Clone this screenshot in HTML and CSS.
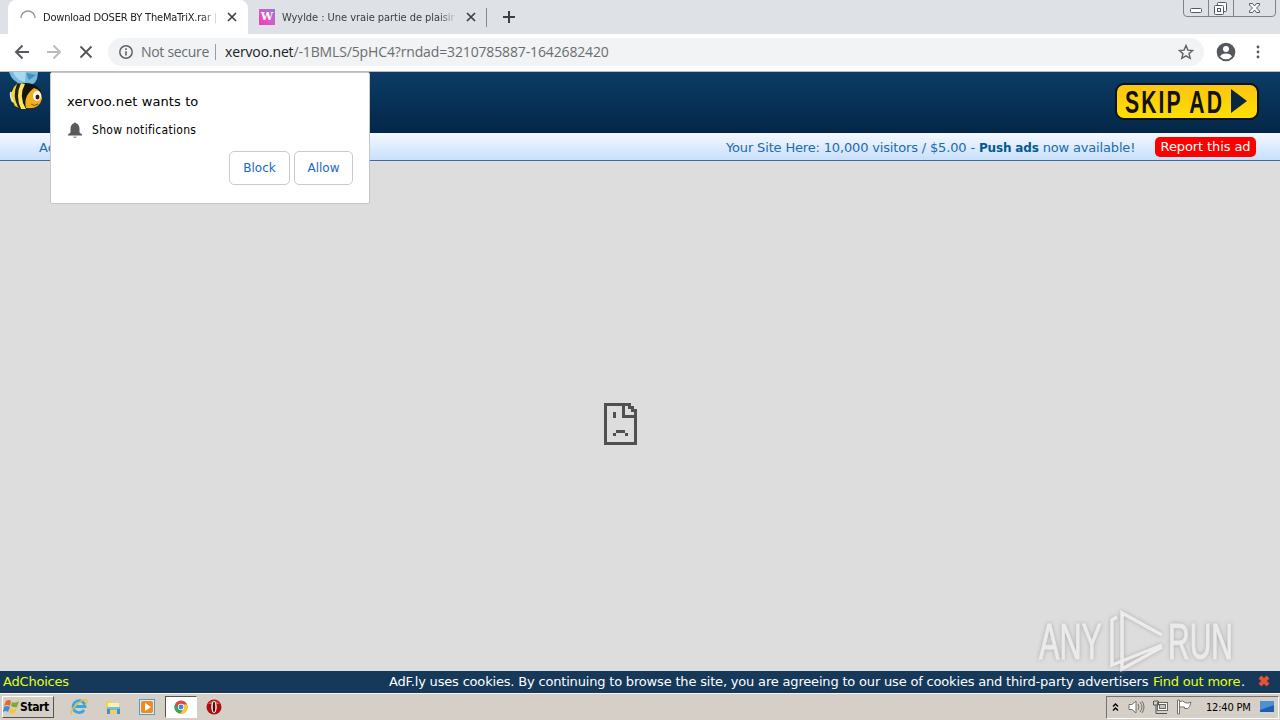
FILE: index.html
```html
<!DOCTYPE html>
<html lang="en">
<head>
    <meta charset="UTF-8">
    <title>Download DOSER BY TheMaTriX.rar</title>
    <link rel="stylesheet" href="styles.css">
</head>
<body>
    <div class="tabs">
        <div class="tab active">
            <svg class="spinner" width="16" height="16" viewBox="0 0 16 16"><path d="M1 9A7 7 0 0 1 15 9" fill="none" stroke="#999" stroke-width="1.6"/></svg>
            <span class="tab-title first-title">Download DOSER BY TheMaTriX.rar |</span>
            <svg class="tab-close" width="10" height="10" viewBox="0 0 10 10"><path d="M1 1L9 9M9 1L1 9" stroke="#3c4043" stroke-width="1.7"/></svg>
        </div>
        <div class="tab other">
            <span class="favicon">W</span>
            <span class="tab-title second-title">Wyylde : Une vraie partie de plaisir !</span>
            <svg class="tab-close" width="10" height="10" viewBox="0 0 10 10"><path d="M1 1L9 9M9 1L1 9" stroke="#3c4043" stroke-width="1.7"/></svg>
        </div>
        <svg class="new-tab" width="12" height="12" viewBox="0 0 12 12"><path d="M6 0V12M0 6H12" stroke="#3c4043" stroke-width="2"/></svg>
        <svg class="window-buttons" width="94" height="18" viewBox="0 0 94 18" fill="none" stroke="#7f838b">
            <path d="M.5 0V13Q.5 16.500 4 16.500H89Q92.500 16.500 92.500 13V0M25.500 0V16M50.500 0V16"/>
            <g stroke="#555961"><rect x="7.500" y="8.500" width="11" height="4" rx="1" fill="#fff"/>
            <rect x="34.500" y="2.500" width="9" height="9" rx="1" fill="#fff"/><rect x="31.500" y="5.500" width="9" height="9" rx="1" fill="#fff"/><rect x="34.500" y="8.500" width="3" height="3"/></g>
            <path d="M66.500 3.500h3l2 2.500 2-2.500h3v1.500l-3 3 3 3v1.500h-3l-2-2.500-2 2.500h-3v-1.500l3-3-3-3z" stroke="#555961" fill="#fff"/>
        </svg>
    </div>

    <div class="toolbar">
        <svg width="16" height="16" viewBox="0 0 16 16" fill="none" stroke="#54575b" stroke-width="1.9"><path d="M15 8H2M8.500 1.500L2 8l6.500 6.500"/></svg>
        <svg width="16" height="16" viewBox="0 0 16 16" fill="none" stroke="#b9bbbe" stroke-width="1.9"><path d="M1 8H14M7.500 1.500L14 8l-6.500 6.500"/></svg>
        <svg width="16" height="16" viewBox="0 0 16 16" fill="none" stroke="#54575b" stroke-width="1.9"><path d="M2.500 2.500l11 11M13.500 2.500l-11 11"/></svg>
        <div class="address">
            <svg class="info" width="14" height="14" viewBox="0 0 14 14"><circle cx="7" cy="7" r="6.200" fill="none" stroke="#5f6368" stroke-width="1.500"/><path d="M7 6.200V10.500M7 3.300V5" stroke="#5f6368" stroke-width="1.600"/></svg>
            <span class="secure">Not secure</span>
            <span class="divider"></span>
            <span class="url"><b>xervoo.net</b>/-1BMLS/5pHC4?rndad=3210785887-1642682420</span>
            <svg class="star" width="16" height="16" viewBox="0 0 16 16"><path d="M8 1.500L9.900 6.100l4.800.4L11 9.600l1.200 4.700L8 11.800l-4.200 2.500L5 9.600 1.300 6.500l4.800-.4z" fill="none" stroke="#5f6368" stroke-width="1.400"/></svg>
        </div>
        <svg class="profile" width="20" height="20" viewBox="0 0 20 20"><circle cx="10" cy="10" r="9.300" fill="#54575b"/><circle cx="10" cy="7" r="3" fill="#fff"/><path d="M4 14.500Q5.500 11.500 10 11.500t6 3Q14 17.200 10 17.200T4 14.500" fill="#fff"/></svg>
        <svg class="dots" width="4" height="14" viewBox="0 0 4 14" fill="#54575b"><circle cx="2" cy="2" r="1.400"/><circle cx="2" cy="7" r="1.400"/><circle cx="2" cy="12" r="1.400"/></svg>
    </div>

    <div class="page">
        <div class="ad-header">
            <svg class="bee" width="46" height="40" viewBox="0 0 46 40">
                <path d="M9 0Q12 10 23 13 34 15 37 7L38 0z" fill="#75b9df"/>
                <path d="M13 0Q16 8 25 10L26 0z" fill="#a9d9f0"/><path d="M26 1L29 8 36 3" fill="#488eb8"/>
                <ellipse cx="26" cy="24" rx="16" ry="13" fill="#16140f"/>
                <path d="M14 15Q8 24 15 34L19 36Q12 24 18 11z" fill="#f4d633"/>
                <path d="M19 11Q13 25 21 37L26 37Q18 24 25 12z" fill="#f9e65a"/>
                <path d="M17 12Q12 24 18 35L21 37Q15 24 21 11z" fill="#26211a"/>
                <path d="M11 20Q10 25 13 30" stroke="#dfe3e2" stroke-width="2" fill="none"/>
                <path d="M34 16Q23 24 26 36 39 38 42 27 42 18 34 16z" fill="#efb11e"/>
                <ellipse cx="37" cy="24" rx="4" ry="5" fill="#fff"/><ellipse cx="37.500" cy="25" rx="2" ry="2.500" fill="#401020"/>
                <path d="M31 32Q34 35 38 32" stroke="#8a4b0a" fill="none"/>
            </svg>
            <div class="skip"><svg width="143" height="36" viewBox="0 0 143 36"><text x="10" y="29.500" textLength="99" lengthAdjust="spacingAndGlyphs">SKIP AD</text><path d="M116 6L132 18 116 30z" fill="#08283f"/></svg></div>
        </div>
        <div class="ad-bar">
            <span class="advertise">Advertise</span>
            <span class="offer">Your Site Here: 10,000 visitors / $5.00 - <b>Push ads</b> now available!</span>
            <span class="report"><span>Report this ad</span></span>
        </div>
        <div class="frame">
            <svg class="sad" width="33" height="42" viewBox="0 0 33 42" shape-rendering="crispEdges" fill="#505050">
                <path fill-rule="evenodd" d="M0 0H27V3H30V6H33V42H0zM3 3V39H30V15H18V3zM21 3V12H30V9H27V6H24V3z"/>
                <path d="M9 9h3v6H9zM12 27h9v3h-9zM9 30h3v3H9zM21 30h3v3h-3z"/>
            </svg>
        </div>
        <div class="cookie-bar">
            <span class="choices">AdChoices</span>
            <span class="cookies">AdF.ly uses cookies. By continuing to browse the site, you are agreeing to our use of cookies and third-party advertisers</span>
            <span class="more">Find out more</span><span class="stop">.</span>
            <svg class="dismiss" width="12" height="12" viewBox="0 0 12 12"><path d="M2 2L10 10M10 2L2 10" stroke="#e75030" stroke-width="4"/></svg>
        </div>
    </div>

    <div class="taskbar">
        <div class="start">
            <svg width="17" height="16" viewBox="0 0 17 16"><path d="M3 2Q6 0 8 2L7 7Q4 5 1 7z" fill="#e8652a"/><path d="M9 3Q12 5 16 2L14 8Q11 9 8 7z" fill="#79ae35"/><path d="M1 8Q4 6 7 8L5 13Q3 11 0 13z" fill="#408bd4"/><path d="M8 9Q10 11 14 9L12 14Q8 16 6 13z" fill="#f8c43a"/></svg>
            <span>Start</span>
        </div>
        <div class="launchers">
            <svg width="18" height="18" viewBox="0 0 18 18" fill="none"><path d="M14 12A6 6 0 1 1 15 8.500H5" stroke="#38a6df" stroke-width="2.800"/><path d="M2 16C-2 13 12 0 16 2 18 3 16 6 15 7" stroke="#e7bd3b" stroke-width="1.400"/></svg>
            <svg width="18" height="18" viewBox="0 0 18 18"><path d="M2 3h5l1 2h7v11H2z" fill="#edce69"/><path d="M4 5h11v7H4z" fill="#fff0a8"/><path d="M3 9h13v3H3z" fill="#78bddd"/><path d="M3 11h3v5H3zM13 11h3v5h-3z" fill="#3e94c3"/></svg>
            <svg width="18" height="18" viewBox="0 0 18 18"><rect x="1.500" y="1.500" width="15" height="15" fill="#d6edfb" stroke="#579ac7"/><rect x="3" y="3" width="12" height="12" rx="2" fill="#ef8a1b"/><path d="M7 5L13 9 7 13z" fill="#fff"/></svg>
            <div class="running"><svg width="14" height="14" viewBox="0 0 16 16"><circle cx="8" cy="8" r="7.500" fill="#dc493c"/><path d="M1.500 4.300A7.500 7.500 0 0 0 7 15.400L11 9.500 5 9.500z" fill="#36a65b"/><path d="M7.500 15.500A7.500 7.500 0 0 0 15 5H8L11 9.500z" fill="#f7c933"/><circle cx="8" cy="8" r="3.600" fill="#fff"/><circle cx="8" cy="8" r="2.800" fill="#4383df"/></svg></div>
            <svg width="16" height="16" viewBox="0 0 16 16"><circle cx="8" cy="8" r="7.500" fill="#a71111"/><path d="M2 5Q8-2 14 5" fill="#df5450"/><ellipse cx="8" cy="8" rx="2.700" ry="6" fill="#fff"/><ellipse cx="8" cy="8" rx="1.300" ry="5.200" fill="#580909"/></svg>
        </div>
        <div class="tray">
            <svg class="chevrons" width="7" height="9" viewBox="0 0 7 9" fill="none" stroke="#000" stroke-width="1.400"><path d="M1 3.500L3.500 1 6 3.500M1 7.500L3.500 5 6 7.500"/></svg>
            <svg width="17" height="16" viewBox="0 0 17 16" fill="none" stroke="#73716b"><path d="M1 5.500h3L8 2v12l-4-3.500H1z" fill="#fff"/><path d="M10 5q2 3 0 6M12 3q4 5 0 10M14 2q4 6 0 12"/></svg>
            <svg width="17" height="16" viewBox="0 0 17 16" fill="none" stroke="#676560"><rect x="5.500" y="3.500" width="10" height="8" fill="#fff"/><rect x="7.500" y="5.500" width="6" height="4" fill="#c4c4c4"/><path d="M1.500 2v4h5V2M4 6v8.500h11M3 1v2M5 1v2" stroke="#55534f"/></svg>
            <svg width="17" height="16" viewBox="0 0 17 16" stroke="#77736c" fill="#fff"><path d="M1.500 1h2v14h-2zM3.500 2.500Q7 1 9 3.500q3 1.500 6-.5Q14 8 12 9.500H8.500V8h-5z"/></svg>
            <span class="clock">12:40 PM</span>
            <svg width="16" height="14" viewBox="0 0 16 14"><path d="M1 1h14v11H1z" fill="#235ca9"/><path d="M1 1h14v4L1 10z" fill="#4c91d4"/><path d="M0 12h10v2H0z" fill="#c7d2e2"/></svg>
        </div>
    </div>

    <div class="permission">
        <p class="wants">xervoo.net wants to</p>
        <div class="request">
            <svg width="14" height="16" viewBox="0 0 14 16" fill="#5a5a5e"><path d="M5.500 1.500Q7-.5 8.500 1.500 11.500 2.500 11.500 7v3.500l2.500 2v1H0v-1l2.500-2V7Q2.500 2.500 5.500 1.500M5 14.700h4Q7 17 5 14.700"/></svg>
            <span>Show notifications</span>
        </div>
        <div class="choices-row"><button class="block">Block</button><button class="allow">Allow</button></div>
    </div>

    <div class="watermark">
        <svg width="202" height="64" viewBox="0 0 202 64">
            <g class="wm-text"><text x="3" y="51" textLength="63" lengthAdjust="spacingAndGlyphs">ANY</text><text x="132" y="51" textLength="65" lengthAdjust="spacingAndGlyphs">RUN</text></g>
            <path class="wm-shape" d="M81 9L76 12V57L126 37M86 53V5L126 27M86 47V61L126 39"/>
        </svg>
    </div>
</body>
</html>
```
FILE: styles.css
```css
* {
    box-sizing: border-box;
}

body {
    margin: 0;
    width: 1280px;
    height: 720px;
    overflow: hidden;
    position: relative;
    display: flex;
    flex-direction: column;
    background: #ddd;
    font-family: "DejaVu Sans", sans-serif;
    font-size: 13px;
}

svg {
    display: block;
    flex: none;
}

span {
    white-space: nowrap;
}

.tabs {
    height: 34px;
    flex: none;
    display: flex;
    align-items: center;
    background: #dee1e6;
    padding-left: 8px;
}

.tab {
    height: 34px;
    display: flex;
    align-items: center;
    font-family: "DejaVu Sans Condensed", "DejaVu Sans", sans-serif;
    font-size: 11px;
    color: #3c4043;
}

.active {
    width: 240px;
    background: #fff;
    border-radius: 8px 8px 0 0;
    padding-left: 12px;
}

.other {
    width: 239px;
    padding-left: 11px;
    background: linear-gradient(#85888d, #85888d) right 8px / 1px 19px no-repeat;
}

.tab-title {
    overflow: hidden;
    -webkit-mask-image: linear-gradient(90deg, #000 90%, transparent);
    mask-image: linear-gradient(90deg, #000 90%, transparent);
}

.first-title {
    width: 176px;
    margin-left: 7px;
    color: #202124;
    letter-spacing: -0.2px;
}

.second-title {
    width: 175px;
    margin-left: 7px;
    letter-spacing: -0.05px;
}

.tab-close {
    margin-left: 8px;
}

.second-title + .tab-close {
    margin-left: 9px;
}

.favicon {
    width: 16px;
    height: 16px;
    background: linear-gradient(45deg, #f23bb5, #d65ac8 50%, #8d7dd0);
    color: #fff;
    font: bold 11px/16px "DejaVu Serif", serif;
    text-align: center;
}

.new-tab {
    margin-left: 16px;
}

.window-buttons {
    margin-left: auto;
    margin-right: 3px;
    align-self: flex-start;
}

.toolbar {
    height: 38px;
    flex: none;
    display: flex;
    align-items: center;
    gap: 16px;
    padding: 0 0 1px 14px;
    background: #fff;
    border-bottom: 1px solid #b9bcbe;
}

.address {
    width: 1096px;
    height: 28px;
    margin-left: -2px;
    padding: 0 10px 0 11px;
    display: flex;
    align-items: center;
    border-radius: 14px;
    background: #f1f3f4;
    color: #6a6d71;
    font-family: "Open Sans", sans-serif;
    font-size: 14px;
}

.address span {
    line-height: 18px;
    padding-bottom: 1px;
}

.secure {
    margin-left: 8px;
    width: 68px;
    letter-spacing: -0.3px;
}

.divider {
    height: 16px;
    border-left: 1px solid #9a9da0;
    margin: 0 9px 0 6px;
}

.url {
    letter-spacing: -0.14px;
}

.url b {
    font-weight: normal;
    color: #202124;
}

.star {
    margin-left: auto;
}

.profile {
    margin-left: -4px;
}

.dots {
    margin-left: 4px;
}

.page {
    height: 621px;
    display: flex;
    flex-direction: column;
}

.ad-header {
    height: 61px;
    flex: none;
    display: flex;
    justify-content: space-between;
    background: linear-gradient(#0b3c66, #042748);
}

.skip {
    margin: 11px 21px 0 0;
    width: 144px;
    height: 37px;
    background: linear-gradient(#fdc414, #ffdf00);
    border: 2px solid #0b1316;
    border-radius: 9px;
}

.skip svg {
    margin: -2px;
}

.skip text {
    font: bold 31px "Liberation Sans", sans-serif;
    letter-spacing: 3px;
    fill: #111;
}

.ad-bar {
    height: 28px;
    flex: none;
    display: flex;
    align-items: center;
    border-bottom: 1px solid #376ba8;
    background: linear-gradient(#f4f9fe, #c8e0fc);
    color: #226ab0;
    font-size: 13px;
    padding-top: 1px;
}

.advertise {
    width: 686px;
    padding-left: 39px;
}

.offer {
    width: 409px;
    margin-left: 40px;
    letter-spacing: -0.16px;
}

.offer b {
    color: #07598f;
    font-size: 12px;
}

.report {
    width: 101px;
    height: 20px;
    margin-left: 20px;
    border-radius: 5px;
    background: #f00;
    color: #fff;
    line-height: 20px;
    text-align: center;
    letter-spacing: -0.1px;
}

.frame {
    height: 510px;
    flex: none;
    background: #ddd;
    display: flex;
    justify-content: center;
    padding: 242px 39px 0 0;
}

.cookie-bar {
    height: 22px;
    flex: none;
    display: flex;
    align-items: center;
    background: #16395a;
    color: #fff;
    padding: 0 0 2px 3px;
}

.choices {
    width: 386px;
    color: #e6ff1a;
    letter-spacing: -0.2px;
}

.cookies {
    width: 760px;
    letter-spacing: -0.18px;
}

.more {
    width: 88px;
    margin-left: 4px;
    color: #e6ff1a;
    letter-spacing: -0.2px;
}

.dismiss {
    margin-left: 13px;
}

.taskbar {
    height: 27px;
    flex: none;
    display: flex;
    align-items: center;
    background: #d5cfc7;
    border-top: 1px solid #f6f4ee;
}

.start {
    width: 52px;
    height: 22px;
    margin-left: 2px;
    display: flex;
    align-items: center;
    border: 1px solid #fff;
    border-right-color: #55534e;
    border-bottom-color: #55534e;
    font: bold 12px "DejaVu Sans Condensed", sans-serif;
    letter-spacing: -0.4px;
}

.launchers {
    display: flex;
    align-items: center;
    gap: 16px;
    margin-left: 16px;
}

.running {
    width: 32px;
    height: 22px;
    display: flex;
    align-items: center;
    justify-content: center;
    background: #fff;
    border: 1px solid #fff;
    border-top-color: #55534e;
    border-left-color: #55534e;
    margin: 0 -7px 0 -7px;
}

.tray {
    width: 173px;
    height: 23px;
    margin: 0 1px 0 auto;
    display: flex;
    align-items: center;
    gap: 7px;
    padding-left: 5px;
    border: 1px solid #fff;
    border-top-color: #77736c;
    border-left-color: #77736c;
    font: 11px "DejaVu Sans Condensed", sans-serif;
}

.chevrons {
    margin-right: 2px;
}

.clock {
    width: 46px;
    margin-left: 6px;
    letter-spacing: -0.2px;
}

/* bubble and logo lie over the page */
.permission {
    position: absolute;
    left: 50px;
    top: 72px;
    width: 320px;
    height: 132px;
    padding: 20px 16px 0;
    background: #fff;
    border: 1px solid #c5c6c8;
    border-radius: 2px;
}

.wants {
    margin: 0;
    line-height: 18px;
    font-size: 13px;
    letter-spacing: 0.1px;
}

.request {
    height: 20px;
    margin-top: 9px;
    display: flex;
    align-items: center;
    gap: 10px;
    padding-left: 1px;
    font: 12px "DejaVu Sans Condensed", sans-serif;
    letter-spacing: 0.3px;
}

.choices-row {
    display: flex;
    justify-content: flex-end;
    gap: 4px;
    margin-top: 11px;
}

.choices-row button {
    height: 34px;
    padding: 0;
    border: 1px solid #c8cacd;
    border-radius: 5px;
    background: #fff;
    color: #1a68c7;
    font: 12px "DejaVu Sans", sans-serif;
}

.block {
    width: 61px;
}

.allow {
    width: 59px;
}

.watermark {
    position: absolute;
    left: 1036px;
    top: 608px;
    filter: drop-shadow(0 0 2px #999);
    opacity: 0.75;
}

.wm-text {
    font: 50px "Liberation Sans", sans-serif;
    fill: #f0f0f0;
    stroke: #f0f0f0;
    stroke-width: 1px;
}

.wm-shape {
    fill: none;
    stroke: #f2f2f2;
    stroke-width: 3.5;
}
```
